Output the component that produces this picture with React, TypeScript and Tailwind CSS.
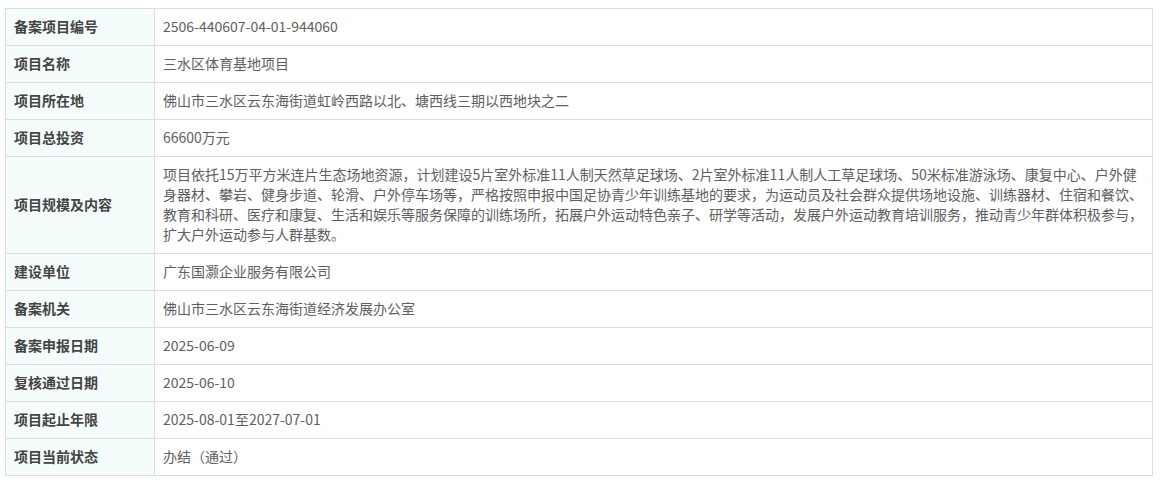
const rows: { label: string; value: string[] }[] = [
  { label: '备案项目编号', value: ['2506-440607-04-01-944060'] },
  { label: '项目名称', value: ['三水区体育基地项目'] },
  { label: '项目所在地', value: ['佛山市三水区云东海街道虹岭西路以北、塘西线三期以西地块之二'] },
  { label: '项目总投资', value: ['66600万元'] },
  {
    label: '项目规模及内容',
    value: [
      '项目依托15万平方米连片生态场地资源，计划建设5片室外标准11人制天然草足球场、2片室外标准11人制人工草足球场、50米标准游泳场、康复中心、户外健',
      '身器材、攀岩、健身步道、轮滑、户外停车场等，严格按照申报中国足协青少年训练基地的要求，为运动员及社会群众提供场地设施、训练器材、住宿和餐饮、',
      '教育和科研、医疗和康复、生活和娱乐等服务保障的训练场所，拓展户外运动特色亲子、研学等活动，发展户外运动教育培训服务，推动青少年群体积极参与，',
      '扩大户外运动参与人群基数。',
    ],
  },
  { label: '建设单位', value: ['广东国灏企业服务有限公司'] },
  { label: '备案机关', value: ['佛山市三水区云东海街道经济发展办公室'] },
  { label: '备案申报日期', value: ['2025-06-09'] },
  { label: '复核通过日期', value: ['2025-06-10'] },
  { label: '项目起止年限', value: ['2025-08-01至2027-07-01'] },
  { label: '项目当前状态', value: ['办结（通过）'] },
]

export default function App() {
  return (
    <div className="bg-white pt-2 pl-[5px] w-[1162px] h-[482px] font-['Microsoft_YaHei','Noto_Sans_CJK_SC',sans-serif] text-[14px] leading-5">
      <table className="w-[1148px] border-collapse border border-[#dddddd]">
        <tbody>
          {rows.map((row) => (
            <tr key={row.label}>
              <td className="w-[149px] border border-[#dddddd] bg-[#f4fcfc] px-2 pt-[7px] pb-[9px] font-bold text-[#444444]">
                {row.label}
              </td>
              <td className="border border-[#dddddd] px-2 pt-[7px] pb-[9px] text-[#606060]">
                {row.value.map((line, i) => (
                  <div key={i} className="whitespace-nowrap">{line}</div>
                ))}
              </td>
            </tr>
          ))}
        </tbody>
      </table>
    </div>
  )
}
